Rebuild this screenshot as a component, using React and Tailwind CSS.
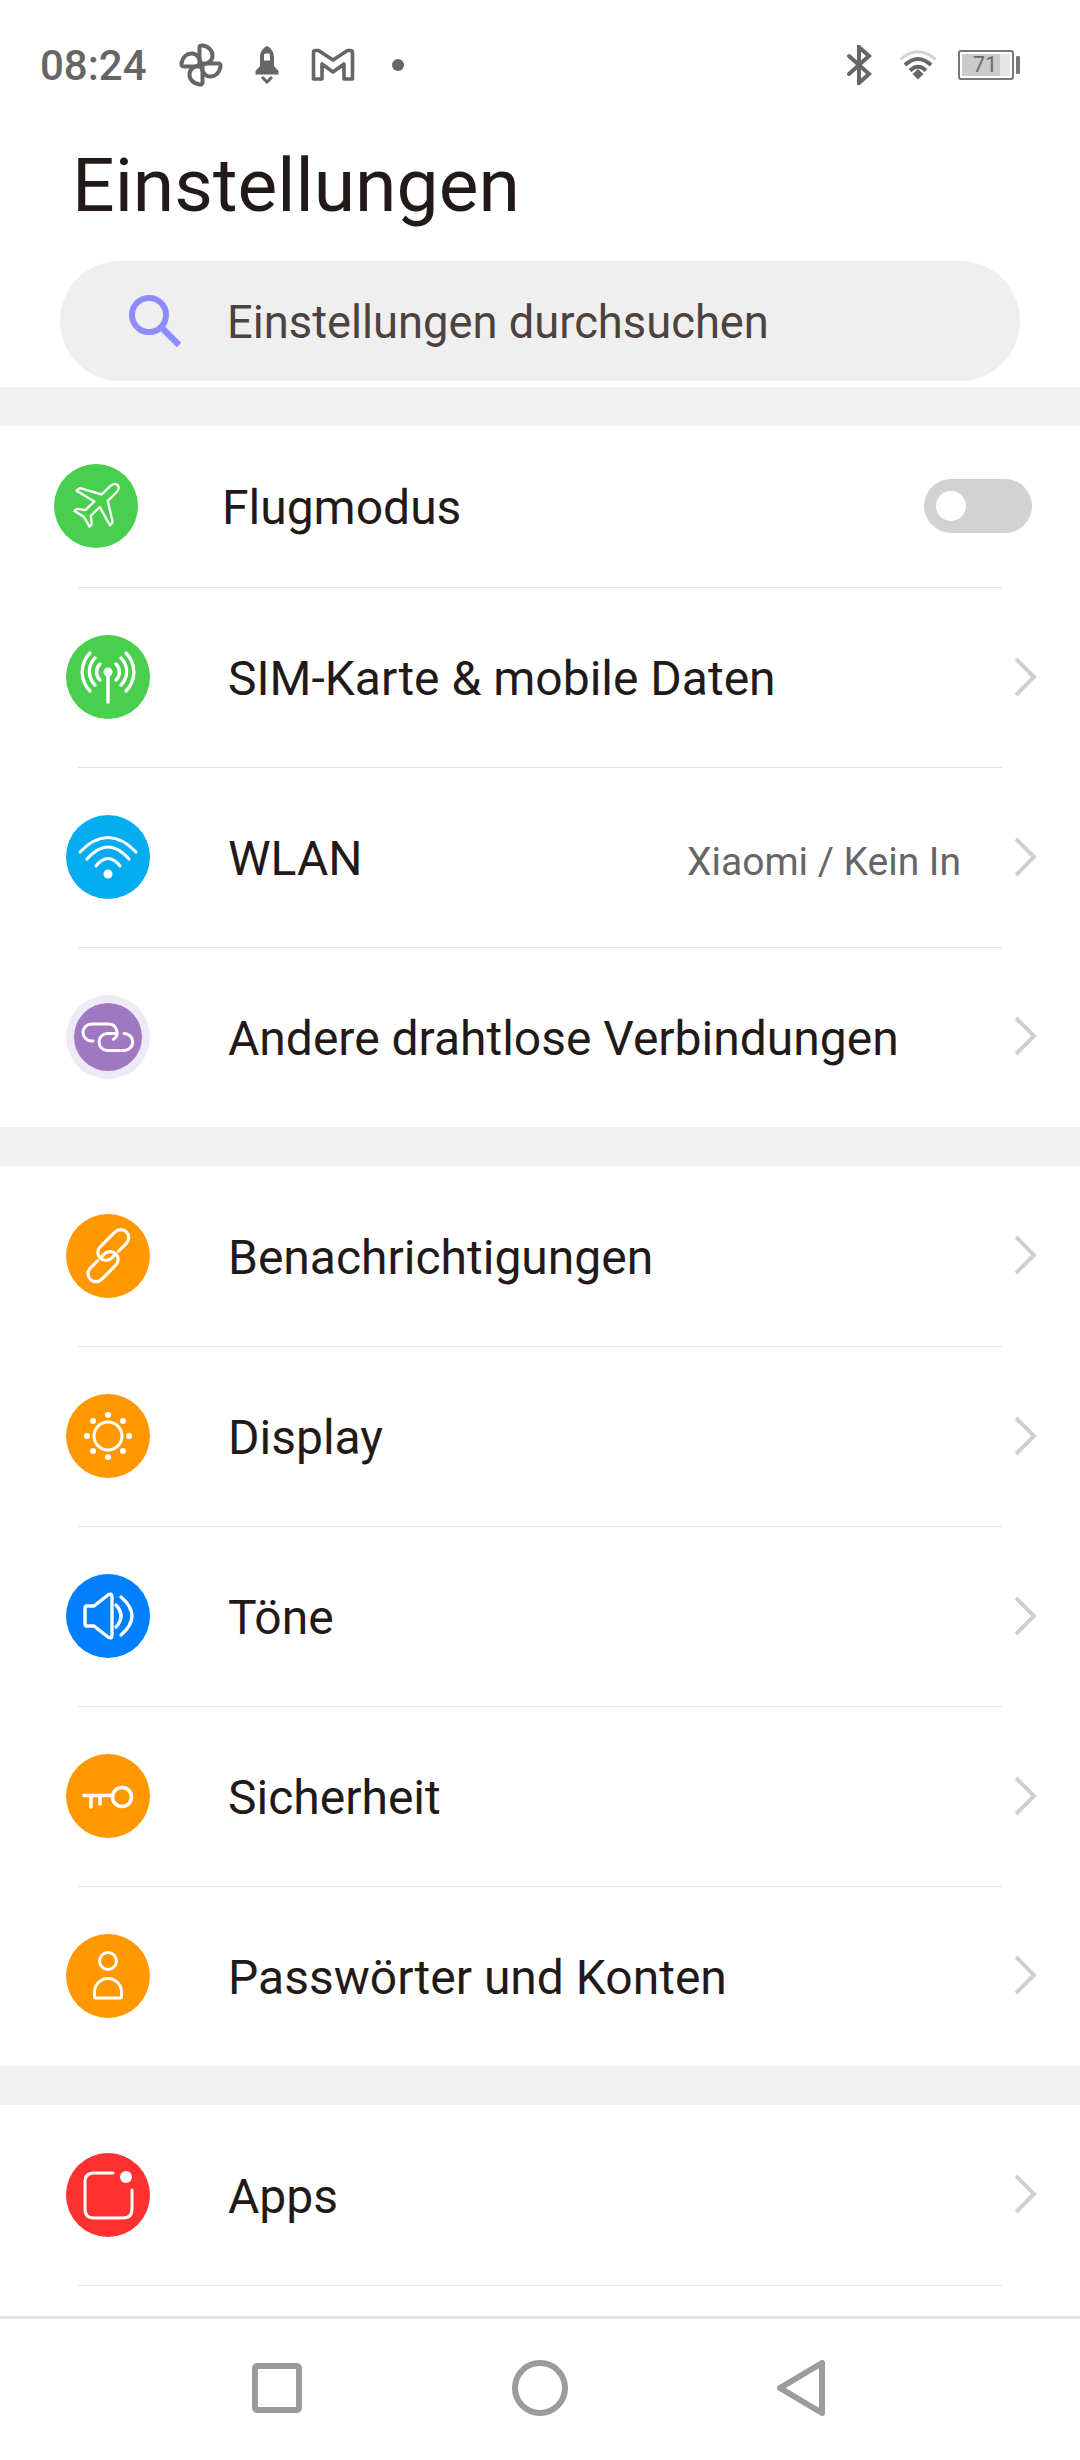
import React from "react";

const FONT = { fontFamily: "Roboto, sans-serif" };

function Circle({ color, children }) {
  return (
    <svg width="84" height="84" viewBox="0 0 84 84" className="mb-[2px] shrink-0">
      <circle cx="42" cy="42" r="42" fill={color} />
      <g fill="none" stroke="#fff" strokeLinecap="round" strokeLinejoin="round">
        {children}
      </g>
    </svg>
  );
}

const PlaneIcon = () => (
  <Circle color="#48cf4d">
    <path
      strokeWidth="2.4"
      transform="rotate(46 42 42)"
      d="M42 12c-2.600 0-4.400 2.600-4.400 6v12L19 40.500c-1 .6-1.500 1.300-1.500 2.500v2.400l20.100-5.400v12.500l-6 4.500c-.6.5-.9 1-.9 1.700v2.300l10.800-2.800 10.800 2.800v-2.300c0-.7-.3-1.200-.9-1.700l-6-4.500V40l20.100 5.400V43c0-1.200-.5-1.900-1.500-2.500L46.400 30V18c0-3.400-1.800-6-4.400-6z"
    />
  </Circle>
);

const AntennaIcon = () => (
  <Circle color="#48cf4d">
    <g strokeWidth="3.4">
      <path d="M42 38v29" />
      <path d="M34 29a11 11 0 0 0 0 16M50 29a11 11 0 0 1 0 16" />
      <path d="M29 23a19 19 0 0 0 0 27M55 23a19 19 0 0 1 0 27" />
      <path d="M24 18a27 27 0 0 0 0 38M60 18a27 27 0 0 1 0 38" />
    </g>
    <circle cx="42" cy="37" r="4.500" fill="#fff" stroke="none" />
  </Circle>
);

const WifiIcon = () => (
  <Circle color="#03adf0">
    <g strokeWidth="3.200">
      <path d="M14 37Q42 8 70 37" />
      <path d="M21 44Q42 20 63 44" />
      <path d="M30 51Q42 36 54 51" />
    </g>
    <circle cx="42" cy="59" r="4.500" fill="#fff" stroke="none" />
  </Circle>
);

const LinkedIcon = () => (
  <svg width="84" height="84" viewBox="0 0 84 84" className="mb-[2px] shrink-0">
    <circle cx="42" cy="42" r="42" fill="#efe9f5" />
    <circle cx="42" cy="42" r="34" fill="#a078c2" />
    <g fill="none" stroke="#fff" strokeWidth="3" strokeLinecap="round" strokeLinejoin="round">
      <path d="M27 46h-1.500a8.500 8.500 0 0 1 0-17h17a8.500 8.500 0 0 1 5 15.400" />
      <path d="M58 38.500a8.500 8.500 0 0 1 .5 17h-17a8.500 8.500 0 0 1 0-17h9" />
    </g>
  </svg>
);

const ChainIcon = () => (
  <Circle color="#ff9800">
    <g strokeWidth="3.200" transform="rotate(-45 42 42)">
      <path d="M31 38H21a8 8 0 0 0 0 16h20a8 8 0 0 0 0-16h-3" />
      <path d="M53 46h11a8 8 0 0 0 0-16H43a8 8 0 0 0 0 16h3" />
    </g>
  </Circle>
);

const SunIcon = () => {
  const dots = [
    [42, 21], [57, 27], [63, 42], [57, 57], [42, 63], [27, 57], [21, 42], [27, 27],
  ];
  return (
    <Circle color="#ff9800">
      <circle cx="42" cy="42" r="14" strokeWidth="3" />
      {dots.map(([x, y]) => (
        <circle key={`${x}-${y}`} cx={x} cy={y} r="3" fill="#fff" stroke="none" />
      ))}
    </Circle>
  );
};

const SpeakerIcon = () => (
  <Circle color="#007fff">
    <g strokeWidth="3.400">
      <path d="M21 32h7l14-11q4-2.500 4 2v38q0 4.500-4 2L28 52h-7q-2 0-2-2V34q0-2 2-2z" />
      <path d="M50 31Q60 42 50 53" />
      <path d="M55 23Q77 42 55 61" />
    </g>
  </Circle>
);

const KeyIcon = () => (
  <Circle color="#ff9800">
    <g strokeWidth="3.600">
      <circle cx="56" cy="43" r="9.500" />
      <path d="M18 41.500h28M25 42v11M34 42v8" />
    </g>
  </Circle>
);

const PersonIcon = () => (
  <Circle color="#ff9800">
    <g strokeWidth="3">
      <circle cx="42" cy="27" r="8.500" />
      <path d="M28.500 58a13.500 13.500 0 0 1 27 0v4.500q0 1.500-1.500 1.500H30q-1.500 0-1.500-1.500z" />
    </g>
  </Circle>
);

const AppsIcon = () => (
  <Circle color="#ff3030">
    <path strokeWidth="3" d="M47 20H28q-9 0-9 9v27q0 9 9 9h29q9 0 9-9V37" />
    <circle cx="60" cy="24" r="6" fill="#fff" stroke="none" />
  </Circle>
);

function Chevron() {
  return (
    <svg width="24" height="40" viewBox="0 0 24 40" className="mb-[3px] shrink-0">
      <path d="M3 2l18 18L3 38" fill="none" stroke="#cfcfcf" strokeWidth="4" />
    </svg>
  );
}

function Row({ icon, label, value, divider = true, height = "h-[180px]" }) {
  return (
    <div className={`relative flex shrink-0 items-center pl-[66px] pr-[43px] ${height}`}>
      {icon}
      <span className="ml-[78px] mt-[2px] flex-1 text-[48px] text-[#221a18]">{label}</span>
      {value && <span className="mr-[52px] mt-[9px] text-[39px] text-[#666666]">{value}</span>}
      <Chevron />
      {divider && <div className="absolute bottom-0 left-[78px] right-[78px] h-px bg-[#e4e4e4]" />}
    </div>
  );
}

const Band = () => <div className="h-[39px] shrink-0 bg-[#f1f1f1]" />;

function StatusBar() {
  return (
    <div className="h-[110px] shrink-0">
      <div className="flex h-full items-center pl-[40px] pr-[60px] pt-[20px] text-[#666666]">
        <span className="mt-[2px] w-[139px] text-[42px] font-medium leading-none">08:24</span>
        {/* pinwheel */}
        <svg width="44" height="44" viewBox="0 0 44 44" className="shrink-0">
          <g fill="none" stroke="#666" strokeWidth="4" strokeLinejoin="round">
            {[0, 90, 180, 270].map((angle) => (
              <path
                key={angle}
                transform={`rotate(${angle} 22 22)`}
                d="M20.500 22V5q0-3 3-2.500C30 3.500 34 8 33.500 13.500 33 19 27 22 20.500 22z"
              />
            ))}
          </g>
        </svg>
        {/* rocket */}
        <svg width="24" height="38" viewBox="0 0 24 38" className="ml-[32px] shrink-0">
          <path
            fill="#666"
            fillRule="evenodd"
            d="M12 0c4 2 7 6 7 11v9l4.500 5v3.500H.5V25L5 20v-9C5 6 8 2 12 0zM9 9v5.500h6V9c0-1-1-1.500-3-1.500S9 8 9 9z"
          />
          <path d="M7 31l5 5 5-5" fill="none" stroke="#666" strokeWidth="3" />
        </svg>
        {/* mail */}
        <svg width="44" height="34" viewBox="0 0 44 34" className="ml-[32px] shrink-0">
          <path
            d="M2.500 31V4.500q0-2 2-2h3L22 12 36.500 2.500h3q2 0 2 2V31h-8.500V16L22 24 11 16v15z"
            fill="none"
            stroke="#666"
            strokeWidth="3.600"
            strokeLinejoin="round"
          />
        </svg>
        <span className="ml-[37px] h-[12px] w-[12px] rounded-full bg-[#666666]" />
        <div className="flex-1" />
        {/* bluetooth */}
        <svg width="26" height="40" viewBox="0 0 26 40" className="shrink-0">
          <path
            d="M3 11l20 18-10 9V2l10 9L3 29"
            fill="none"
            stroke="#666"
            strokeWidth="4"
            strokeLinejoin="miter"
            strokeLinecap="round"
          />
        </svg>
        {/* wifi */}
        <svg width="38" height="30" viewBox="0 0 38 30" className="ml-[27px] shrink-0">
          <path d="M1.500 9.500Q19-6 36.500 9.500" fill="none" stroke="#d4d4d4" strokeWidth="3" />
          <path d="M6 15Q19 3 32 15" fill="none" stroke="#666" strokeWidth="4" />
          <path d="M11 20.500Q19 13 27 20.500" fill="none" stroke="#666" strokeWidth="4" />
          <path d="M13.500 24L19 19l5.500 5L19 29.500z" fill="#666" />
        </svg>
        {/* battery */}
        <div className="ml-[21px] flex shrink-0 items-center">
          <div className="relative h-[30px] w-[56px] rounded-[3px] border-[2px] border-[#777777] p-[2px]">
            <div className="flex h-full w-full bg-[#e6e6e6]">
              <div className="h-full w-[38px] bg-[#cacaca]" />
            </div>
            <span className="absolute inset-0 flex items-center justify-center pr-[2px] text-[22px] leading-none text-[#6a6a6a]">
              71
            </span>
          </div>
          <div className="ml-[2px] h-[18px] w-[4px] rounded-[1px] bg-[#777777]" />
        </div>
      </div>
    </div>
  );
}

function NavBar() {
  return (
    <div className="flex h-[144px] shrink-0 items-start border-t-[3px] border-[#e4e4e4] bg-white pl-[252px] pr-[255px] pt-[41px]">
      <div className="flex w-full items-center justify-between">
        <svg width="50" height="56" viewBox="0 0 50 56">
          <rect x="3" y="6" width="44" height="44" rx="2" fill="none" stroke="#9c9c9c" strokeWidth="6" />
        </svg>
        <svg width="56" height="56" viewBox="0 0 56 56">
          <circle cx="28" cy="28" r="25" fill="none" stroke="#9c9c9c" strokeWidth="6" />
        </svg>
        <svg width="48" height="56" viewBox="0 0 48 56">
          <path d="M45 3v50L3 28z" fill="none" stroke="#9c9c9c" strokeWidth="6" strokeLinejoin="round" />
        </svg>
      </div>
    </div>
  );
}

export default function App() {
  return (
    <div className="flex h-[2460px] w-[1080px] flex-col overflow-hidden bg-white" style={FONT}>
      <StatusBar />
      <h1 className="ml-[72px] h-[151px] shrink-0 pt-[28px] text-[75px] font-normal leading-[94px] text-[#221a18]">
        Einstellungen
      </h1>
      <div className="mx-[60px] flex h-[120px] shrink-0 items-center rounded-full bg-[#efefef] pl-[69px]">
        <svg width="52" height="52" viewBox="0 0 52 52" className="shrink-0">
          <circle cx="20" cy="20" r="17" fill="none" stroke="#8c8cff" strokeWidth="6" />
          <path d="M32 32l18 18" stroke="#8c8cff" strokeWidth="6.500" />
        </svg>
        <span className="ml-[46px] mt-[3px] text-[45.3px] text-[#4d4240]">Einstellungen durchsuchen</span>
      </div>
      <div className="mt-[6px] h-[39px] shrink-0 bg-[#f1f1f1]" />
      <div className="relative flex h-[162px] shrink-0 items-center pl-[54px] pr-[48px]">
        <PlaneIcon />
        <span className="ml-[84px] mt-[2px] flex-1 text-[48px] text-[#221a18]">Flugmodus</span>
        <div className="mb-[2px] flex h-[54px] w-[108px] items-center rounded-full bg-[#d2d2d2] pl-[12px]">
          <div className="h-[30px] w-[30px] rounded-full bg-white" />
        </div>
        <div className="absolute bottom-0 left-[78px] right-[78px] h-px bg-[#e4e4e4]" />
      </div>
      <Row icon={<AntennaIcon />} label="SIM-Karte & mobile Daten" />
      <Row icon={<WifiIcon />} label="WLAN" value="Xiaomi / Kein In" />
      <Row icon={<LinkedIcon />} label="Andere drahtlose Verbindungen" divider={false} height="h-[179px]" />
      <Band />
      <Row icon={<ChainIcon />} label="Benachrichtigungen" height="h-[181px]" />
      <Row icon={<SunIcon />} label="Display" />
      <Row icon={<SpeakerIcon />} label="Töne" />
      <Row icon={<KeyIcon />} label="Sicherheit" />
      <Row icon={<PersonIcon />} label="Passwörter und Konten" divider={false} height="h-[179px]" />
      <Band />
      <Row icon={<AppsIcon />} label="Apps" height="h-[181px]" />
      <div className="flex-1" />
      <NavBar />
    </div>
  );
}
